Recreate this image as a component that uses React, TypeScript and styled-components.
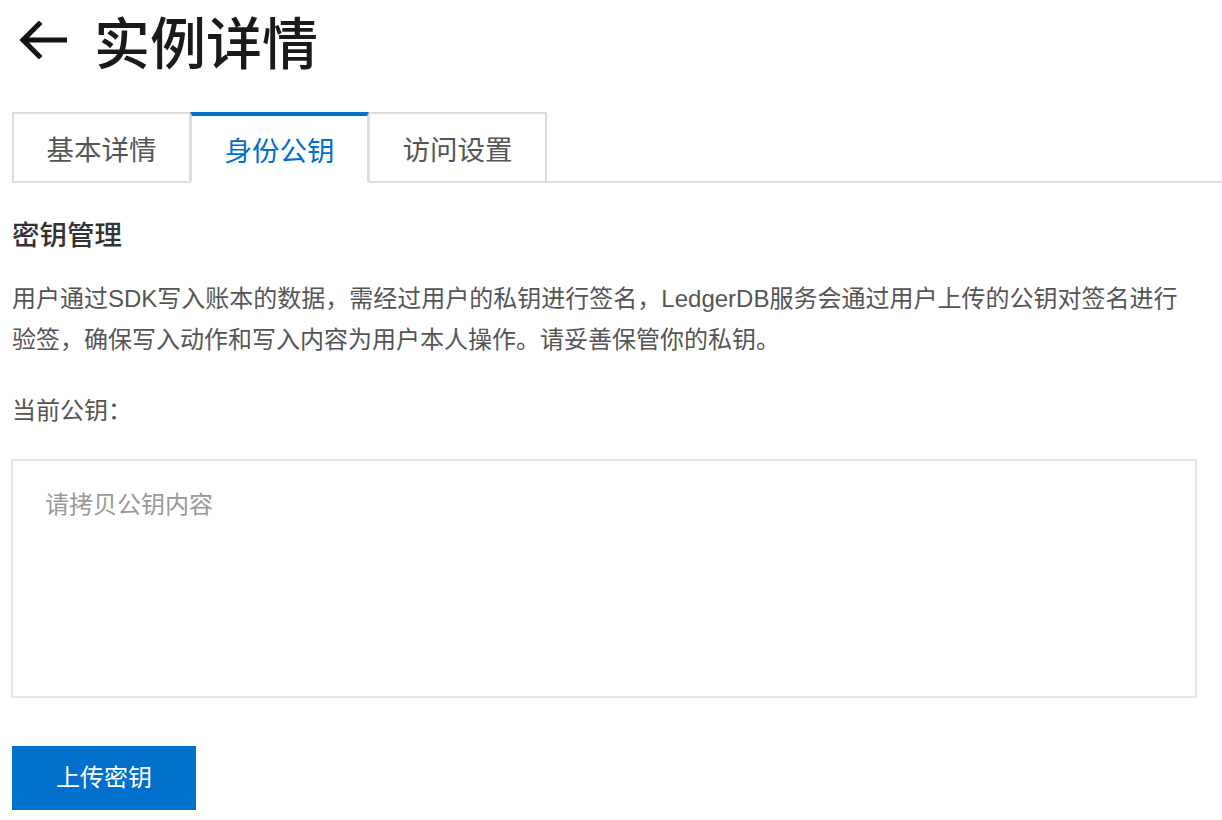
import styled, { createGlobalStyle } from 'styled-components';
import { useState } from 'react';

const GlobalStyle = createGlobalStyle`
  html, body {
    margin: 0;
    padding: 0;
    background: #ffffff;
  }
  body {
    font-family: "Liberation Sans", "Noto Sans CJK SC", sans-serif;
    color: #333333;
  }
  * {
    box-sizing: border-box;
  }
`;

const Page = styled.div`
  width: 1222px;
  padding-left: 12px;
  display: flex;
  flex-direction: column;
`;

const TitleRow = styled.div`
  height: 80px;
  display: flex;
  align-items: center;
  gap: 26px;
  padding-left: 6px;
  margin-bottom: 32px;
`;

const BackButton = styled.button`
  width: 50px;
  height: 40px;
  padding: 0;
  border: none;
  background: none;
  display: flex;
  align-items: center;
  justify-content: center;
  cursor: pointer;
  color: #111111;
`;

const Title = styled.h1`
  margin: 0;
  font-size: 56px;
  line-height: 80px;
  font-weight: 500;
  color: #1a1a1a;
  font-family: "Noto Sans CJK SC", sans-serif;
`;

const TabBar = styled.div`
  display: flex;
  border-bottom: 2px solid #dddddd;
`;

const Tab = styled.button<{ $active: boolean }>`
  position: relative;
  width: 179px;
  height: 71px;
  margin-bottom: -2px;
  margin-right: -1px;
  padding: 0;
  background: #ffffff;
  border: 2px solid #dddddd;
  border-top: ${({ $active }) => ($active ? '4px solid #0070cc' : '2px solid #dddddd')};
  border-bottom: 2px solid ${({ $active }) => ($active ? '#ffffff' : '#dddddd')};
  z-index: ${({ $active }) => ($active ? 1 : 0)};
  font-family: "Noto Sans CJK SC", sans-serif;
  font-size: 27.5px;
  color: ${({ $active }) => ($active ? '#0070cc' : '#555555')};
  cursor: pointer;
  display: flex;
  align-items: center;
  justify-content: center;
`;

const SectionTitle = styled.h2`
  margin: 30px 0 0 0;
  font-size: 27.5px;
  line-height: 40px;
  font-weight: 500;
  color: #333333;
  font-family: "Noto Sans CJK SC", sans-serif;
`;

const Description = styled.p`
  margin: 25px 0 0 0;
  width: 1186px;
  font-size: 24px;
  line-height: 41px;
  color: #555555;
`;

const Label = styled.div`
  margin-top: 30px;
  font-size: 24px;
  line-height: 41px;
  color: #555555;
`;

const KeyInput = styled.textarea`
  margin: 28px 0 0 -1px;
  width: 1186px;
  height: 239px;
  padding: 26px 32px;
  border: 2px solid #e6e6e6;
  border-radius: 0;
  resize: none;
  outline: none;
  font-family: "Liberation Sans", "Noto Sans CJK SC", sans-serif;
  font-size: 24px;
  line-height: 36px;
  color: #333333;

  &::placeholder {
    color: #999999;
  }
`;

const PrimaryButton = styled.button`
  margin-top: 48px;
  width: 184px;
  height: 64px;
  border: none;
  border-radius: 0;
  background: #0070cc;
  color: #ffffff;
  font-family: "Noto Sans CJK SC", sans-serif;
  font-size: 24px;
  line-height: 60px;
  padding: 0 0 4px 0;
  cursor: pointer;
`;

const tabs = ['基本详情', '身份公钥', '访问设置'];

export default function App() {
  const [active, setActive] = useState(1);
  const [key, setKey] = useState('');

  return (
    <>
      <GlobalStyle />
      <Page>
        <TitleRow>
          <BackButton aria-label="back">
            <svg width="48" height="38" viewBox="0 0 48 38" fill="none">
              <path
                d="M46 19H5M20 3L4 19l16 16"
                stroke="currentColor"
                strokeWidth="5"
                strokeLinecap="square"
                strokeLinejoin="miter"
              />
            </svg>
          </BackButton>
          <Title>实例详情</Title>
        </TitleRow>

        <TabBar>
          {tabs.map((t, i) => (
            <Tab key={t} $active={i === active} onClick={() => setActive(i)}>
              {t}
            </Tab>
          ))}
        </TabBar>

        <SectionTitle>密钥管理</SectionTitle>
        <Description>
          用户通过SDK写入账本的数据，需经过用户的私钥进行签名，LedgerDB服务会通过用户上传的公钥对签名进行验签，确保写入动作和写入内容为用户本人操作。请妥善保管你的私钥。
        </Description>

        <Label>当前公钥：</Label>
        <KeyInput
          placeholder="请拷贝公钥内容"
          value={key}
          onChange={(e) => setKey(e.target.value)}
        />

        <div>
          <PrimaryButton>上传密钥</PrimaryButton>
        </div>
      </Page>
    </>
  );
}
